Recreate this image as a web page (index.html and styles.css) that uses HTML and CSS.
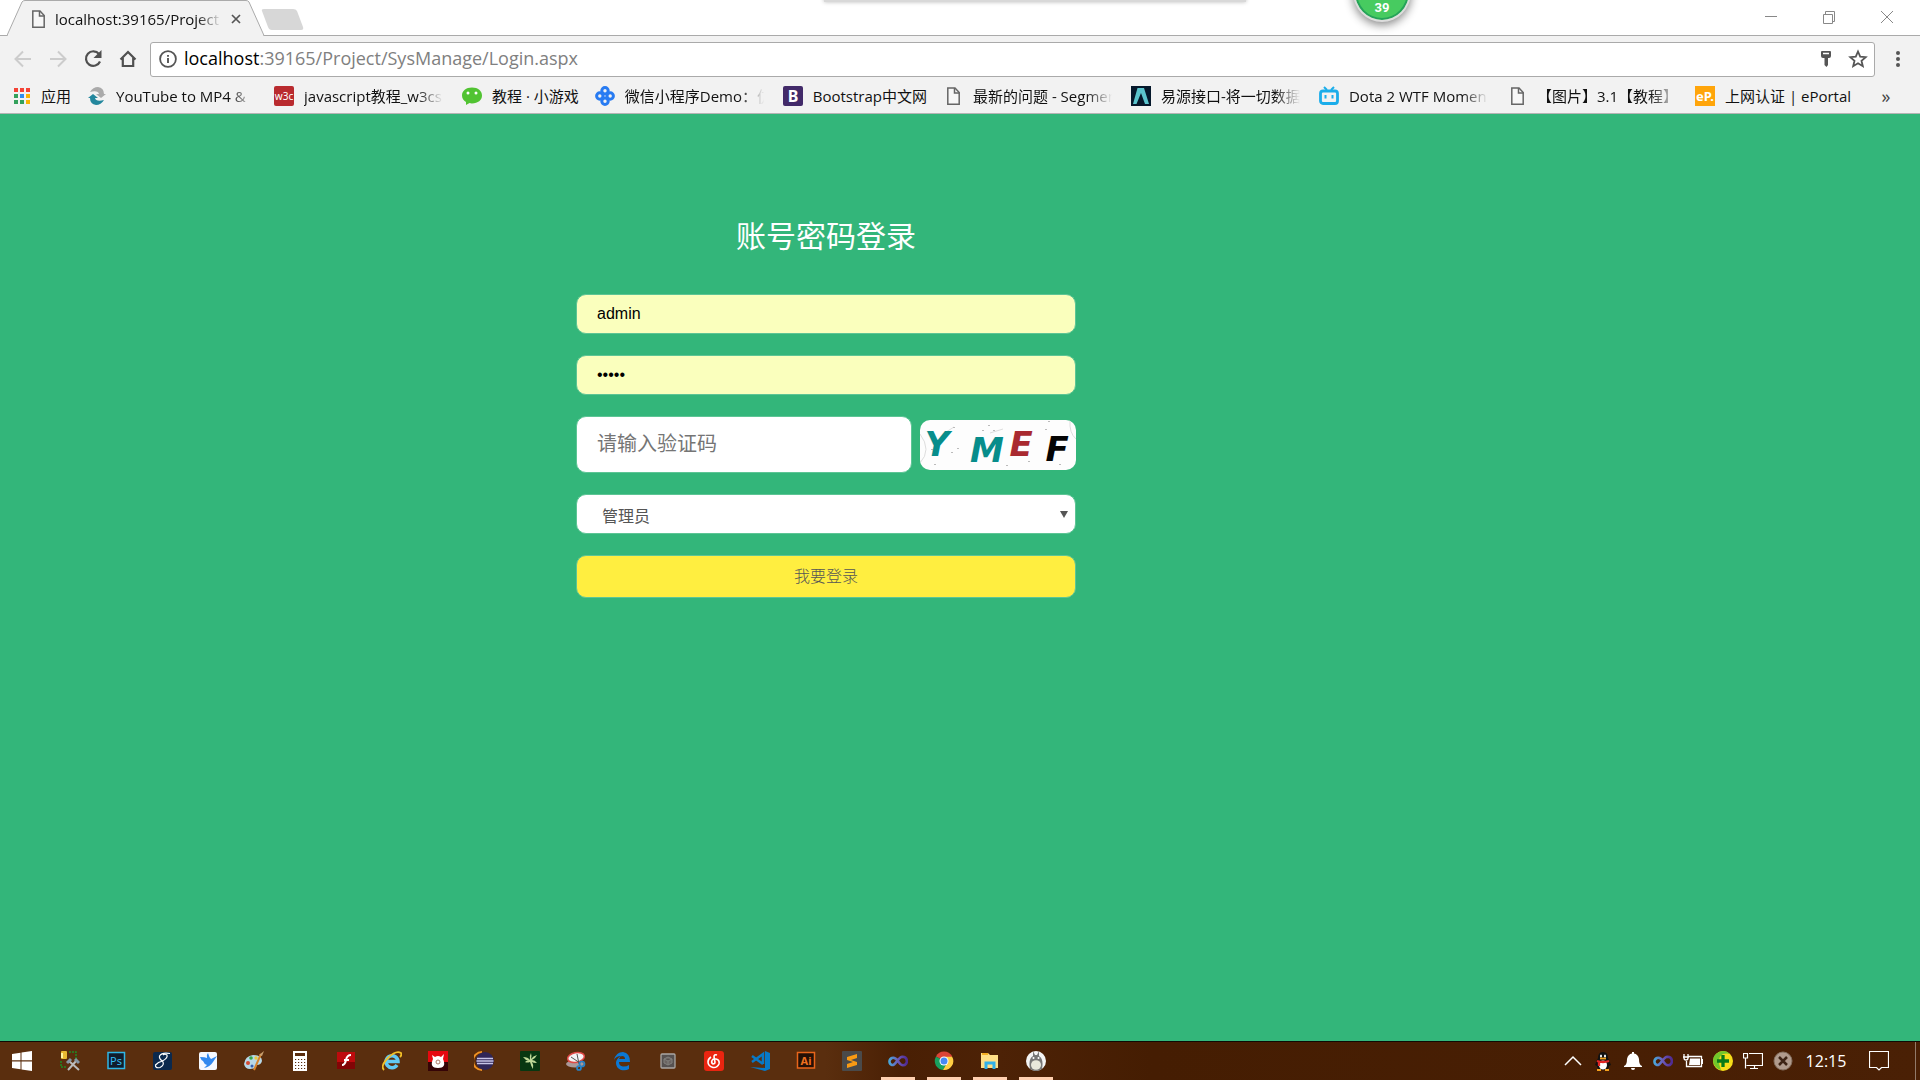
FILE: index.html
```html
<!DOCTYPE html>
<html lang="zh-CN">
<head>
<meta charset="utf-8">
<title>localhost:39165/Project/SysManage/Login.aspx</title>
<link rel="stylesheet" href="styles.css">
</head>
<body>
<svg class="defs" aria-hidden="true">
  <symbol id="doc" viewBox="0 0 20 20"><path d="M4.800 2H12L16.200 6.500V18.200H4.800Z" fill="#fff" fill-opacity=".4" stroke="#666" stroke-width="1.500"/><path d="M11.500 2V7H16.500" fill="none" stroke="#666" stroke-width="1.500"/></symbol>
  <linearGradient id="loop" x1="0" x2="1"><stop offset="0" stop-color="#49a5d8"/><stop offset=".5" stop-color="#6c58b8"/><stop offset="1" stop-color="#4f2a92"/></linearGradient>
  <symbol id="infinity" viewBox="0 0 20 20"><path d="M10 10C7.500 6.500 5.500 6.500 4 7C.5 8.500 .8 13 4 14C7.500 15 10 6 14.500 5.800C20 5.800 20.500 14 15 14.300C12.500 14.300 11.500 12 10 10Z" fill="none" stroke="url(#loop)" stroke-width="2.600"/></symbol>
</svg>

<header class="browser">
  <div class="tabstrip">
    <div class="tab">
      <svg class="tab-shape" viewBox="0 0 258 36" preserveAspectRatio="none" aria-hidden="true"><path d="M0 35.500L15 2Q16 .5 18 .5H239Q241 .5 242 2L257 35.500" fill="#f2f2f2" stroke="#aaa"/><path d="M1 35.500H256" stroke="#f2f2f2" stroke-width="2"/></svg>
      <svg class="ico20"><use href="#doc"/></svg>
      <span class="tab-title">localhost:39165/Project</span>
      <button class="tab-close" aria-label="关闭标签页"><svg viewBox="0 0 10 10"><path d="M1 1L9 9M9 1L1 9" stroke="#555" stroke-width="1.700"/></svg></button>
    </div>
    <button class="new-tab" aria-label="新标签页"><svg viewBox="0 0 44 22"><path d="M1 2Q0 0 3 0H32Q35 0 36 2L42 18Q43 21 40 21H11Q8 21 7 18Z" fill="#d7d7d7"/></svg></button>
    <div class="window-controls">
      <button aria-label="最小化"><svg viewBox="0 0 14 14"><path d="M1 6.500H13" stroke="#888"/></svg></button>
      <button aria-label="还原"><svg viewBox="0 0 14 14"><path d="M1.500 4.500H10.500V13.500H1.500ZM3.500 4V1.500H12.500V11.500H11" fill="none" stroke="#888"/></svg></button>
      <button aria-label="关闭"><svg viewBox="0 0 14 14"><path d="M1 1L13 13M13 1L1 13" stroke="#888"/></svg></button>
    </div>
  </div>
  <div class="toolbar">
    <button class="nav" aria-label="后退"><svg viewBox="0 0 20 20"><path d="M18 10H3M10 2.500L2.500 10L10 17.500" fill="none" stroke="#ccc" stroke-width="2"/></svg></button>
    <button class="nav" aria-label="前进"><svg viewBox="0 0 20 20"><path d="M2 10H17M10 2.500L17.500 10L10 17.500" fill="none" stroke="#ccc" stroke-width="2"/></svg></button>
    <button class="nav" aria-label="重新加载"><svg viewBox="0 0 20 20"><path d="M16 5A7.300 7.300 0 1 0 17 12.500" fill="none" stroke="#505050" stroke-width="2.200"/><path d="M18.500 1V9H10.500Z" fill="#505050"/></svg></button>
    <button class="nav" aria-label="主页"><svg viewBox="0 0 20 20"><path d="M2.500 10.500L10 3L17.500 10.500M4.800 9V17H15.200V9" fill="none" stroke="#505050" stroke-width="2.200"/></svg></button>
    <div class="omnibox">
      <svg class="ico18" viewBox="0 0 18 18"><circle cx="9" cy="9" r="7.900" fill="none" stroke="#555" stroke-width="1.800"/><path d="M9 8V13M9 5V6.700" stroke="#555" stroke-width="1.900"/></svg>
      <a class="url" href="#"><span class="host">localhost</span>:39165/Project/SysManage/Login.aspx</a>
      <button class="omni-btn" aria-label="密码"><svg viewBox="0 0 20 20"><path d="M5 3Q5 2 6 2H14Q15 2 15 3V7Q15 9 13 9H12V16L10.500 18L8.500 16V9H7Q5 9 5 7Z" fill="#555"/><path d="M7 4.500H13" stroke="#fff" stroke-width="1.500"/></svg></button>
      <button class="omni-btn" aria-label="收藏"><svg viewBox="0 0 20 20"><path d="M10 2.500L12.200 7.600L17.700 8.100L13.500 11.800L14.800 17.200L10 14.300L5.200 17.200L6.500 11.800L2.300 8.100L7.800 7.600Z" fill="none" stroke="#555" stroke-width="1.800"/></svg></button>
    </div>
    <button class="menu" aria-label="菜单"><svg viewBox="0 0 20 20"><g fill="#555"><circle cx="10" cy="4" r="2"/><circle cx="10" cy="10" r="2"/><circle cx="10" cy="16" r="2"/></g></svg></button>
  </div>
  <nav class="bookmarks">
    <a href="#"><svg class="ico20" viewBox="0 0 20 20"><g fill="#f44336"><path d="M2 2h4v4H2zM8 2h4v4H8zM14 2h4v4h-4z"/></g><path d="M2 8h4v4H2zM2 14h4v4H2zM8 14h4v4H8z" fill="#34a15c"/><path d="M8 8h4v4H8z" fill="#2f8df0"/><path d="M14 8h4v4h-4zM14 14h4v4h-4z" fill="#fbb404"/></svg><span class="label">应用</span></a>
    <a href="#"><svg class="ico20" viewBox="0 0 20 20"><path d="M3 6Q6 1 11 1Q17 2 17 8L19 8L14 12L9 8H12Q11 4 3 6Z" fill="#aaa"/><path d="M17 14Q14 19 9 19Q3 18 3 12L1 12L6 8L11 12H8Q9 16 17 14Z" fill="#23879d"/></svg><span class="label wide">YouTube to MP4 &amp;</span></a>
    <a href="#"><svg class="ico20" viewBox="0 0 20 20"><rect width="20" height="20" rx="2" fill="#b92b2f"/><text class="glyph" x="10" y="13.500" font-size="10" fill="#fff">w3c</text></svg><span class="label wide">javascript教程_w3cs</span></a>
    <a href="#"><svg class="ico20" viewBox="0 0 20 20"><path d="M10 1.500C4 1.500 0 5 0 9.500C0 12.500 1.500 14.500 4 16V19L7.500 17Q9 17.500 10 17.400C16 17.400 20 14 20 9.500S16 1.500 10 1.500Z" fill="#51c332"/><circle cx="6" cy="7" r="1.500" fill="#fff"/><circle cx="14" cy="7" r="1.500" fill="#fff"/></svg><span class="label">教程 · 小游戏</span></a>
    <a href="#"><svg class="ico20" viewBox="0 0 20 20"><g fill="none" stroke="#287bf2" stroke-width="3"><circle cx="10" cy="4.800" r="3.200"/><circle cx="4.800" cy="10" r="3.200"/><circle cx="15.200" cy="10" r="3.200"/><circle cx="10" cy="15.200" r="3.200"/></g></svg><span class="label wide">微信小程序Demo：仿</span></a>
    <a href="#"><svg class="ico20" viewBox="0 0 20 20"><rect width="20" height="20" rx="2" fill="#422a69"/><text class="glyph" x="10" y="15.500" font-size="16" font-weight="700" fill="#fff">B</text></svg><span class="label">Bootstrap中文网</span></a>
    <a href="#"><svg class="ico20"><use href="#doc"/></svg><span class="label wide">最新的问题 - Segmen</span></a>
    <a href="#"><svg class="ico20" viewBox="0 0 20 20"><rect width="20" height="20" fill="#06182b"/><path d="M2 18L6.500 2H13L18 18H14L10 7L5.500 18Z" fill="#5bc4cd"/></svg><span class="label wide">易源接口-将一切数据</span></a>
    <a href="#"><svg class="ico20" viewBox="0 0 20 20"><path d="M5 1L8 4M15 1L12 4" stroke="#1badea" stroke-width="2"/><rect x="1.500" y="5" width="17" height="12.500" rx="2.500" fill="none" stroke="#1badea" stroke-width="2.800"/><path d="M6.500 9V12.500M13.500 9V12.500" stroke="#1badea" stroke-width="2"/></svg><span class="label wide">Dota 2 WTF Momen</span></a>
    <a href="#"><svg class="ico20"><use href="#doc"/></svg><span class="label wide">【图片】3.1【教程】</span></a>
    <a href="#"><svg class="ico20" viewBox="0 0 20 20"><rect width="20" height="20" fill="#ffa50a"/><text class="glyph" x="10" y="15" font-size="13" font-weight="700" fill="#fff">eP.</text></svg><span class="label">上网认证 | ePortal</span></a>
    <button class="more" aria-label="更多书签">»</button>
  </nav>
</header>

<div class="drag-shadow"></div>
<div class="speed-ball">39</div>

<main class="page">
  <form class="login" onsubmit="return false">
    <h1>账号密码登录</h1>
    <input class="field filled" type="text" value="admin" aria-label="账号">
    <input class="field filled" type="password" value="admin" aria-label="密码">
    <div class="captcha-row">
      <input class="field code" type="text" placeholder="请输入验证码" aria-label="验证码">
      <svg class="captcha" viewBox="0 0 156 50" role="img" aria-label="验证码图片">
        <rect width="156" height="50" fill="#fdfdfd"/>
        <g fill="none" stroke="#ddd"><path d="M0 14Q12 30 0 43M150 0Q149 13 156 19M26 12L34 7M70 13L83 9"/></g>
        <g fill="#bbb"><path d="M33 7h2v1h-2zM11 29h2v1h-2zM31 32h2v1h-2zM37 28h2v1h-2zM14 44h2v1h-2zM62 10h2v1h-2zM73 10h2v1h-2zM128 1h2v1h-2zM125 9h2v1h-2zM108 41h2v1h-2zM86 45h2v1h-2zM139 44h2v1h-2zM68 5h2v1h-2z"/></g>
        <g class="captcha-letters">
          <text x="17" y="36" fill="#078d8b">Y</text>
          <text x="67" y="42" fill="#078d8b">M</text>
          <text x="101" y="36" fill="#a92a30">E</text>
          <text x="137" y="41" fill="#050505">F</text>
        </g>
      </svg>
    </div>
    <div class="select-wrap">
      <select class="field role" aria-label="角色"><option>管理员</option><option>教师</option><option>学生</option></select>
      <svg class="caret" viewBox="0 0 8 8" aria-hidden="true"><path d="M0 1H8L4 8Z" fill="#555"/></svg>
    </div>
    <button class="field submit" type="submit">我要登录</button>
  </form>
</main>

<footer class="taskbar">
  <button class="start" aria-label="开始"><svg class="ico20" viewBox="0 0 20 20"><path d="M0 3L8.500 1.800V9.300H0ZM9.500 1.600L20 0V9.300H9.500ZM0 10.400H8.500V18.200L0 17ZM9.500 10.400H20V20L9.500 18.400Z" fill="#fff"/></svg></button>
  <button class="app" aria-label="数据库工具"><svg class="ico20" viewBox="0 0 20 20"><path d="M9 1H16V8M1 10V16H6" fill="none" stroke="#218b25" stroke-width="1.500" stroke-dasharray="2 1"/><rect x="1" y="0" width="6" height="8" rx="1" fill="#e8b832"/><path d="M2 2V7" stroke="#fff3a0" stroke-width="2"/><path d="M8 19L17 9M9 10L19 19" stroke="#bbb" stroke-width="2"/><path d="M7 12L11 8M15 8L19 12" stroke="#8797a5" stroke-width="3"/></svg></button>
  <button class="app" aria-label="Photoshop"><svg class="ico20" viewBox="0 0 20 20"><rect x="2" y="1.500" width="16.500" height="16" fill="#101c2c" stroke="#2fb6e6" stroke-width="1.500"/><text class="glyph" x="10" y="13.500" font-size="11" fill="#35bdf0">Ps</text></svg></button>
  <button class="app" aria-label="字体工具"><svg class="ico20" viewBox="0 0 20 20"><rect x="1" y="1" width="19" height="18" rx="2" fill="#0b294d"/><path d="M18 2.500Q10 1 7.500 5Q7 8 10.500 10Q13 14 8 16.500Q3 17.500 3.500 14Q6 11 10.500 10Q16 7 15 4Q13 2.500 11 4" fill="none" stroke="#fff" stroke-width="1.200"/></svg></button>
  <button class="app" aria-label="迅雷"><svg class="ico20" viewBox="0 0 20 20"><rect x="1" y="1" width="18" height="18" rx="2" fill="#f5f8ff"/><path d="M2 6Q7 6 9 7Q8 4 10 2Q11 6 13 8L19 5L15 11Q12 16 6 17L9 14Q6 13 5 10Q3 9 2 6Z" fill="#3288ef"/></svg></button>
  <button class="app" aria-label="画图"><svg class="ico20" viewBox="0 0 20 20"><path d="M0 13Q1 5 9 4Q18 4 18 10Q17 14 13 14Q12 18 6 18Q1 18 0 13Z" fill="#b7d8e8"/><circle cx="4" cy="12" r="2" fill="#d44b33"/><circle cx="7" cy="7" r="1.800" fill="#36a34a"/><circle cx="12" cy="7" r="1.700" fill="#eec73b"/><circle cx="8" cy="15" r="1.500" fill="#375faf"/><path d="M10 19L17 3" stroke="#d7832c" stroke-width="2"/><path d="M15 4L20 0L18 5Z" fill="#c8a06f"/></svg></button>
  <button class="app" aria-label="计算器"><svg class="ico20" viewBox="0 0 20 20"><rect x="3" width="14" height="20" fill="#fff"/><path d="M5 2h10v3H5z" fill="#5a2d0e"/><path d="M5 8.500h11M5 11.500h11M5 14.500h11M5 17.500h11" stroke="#5a2d0e" stroke-width="1.200" stroke-dasharray="1.200 1.800"/></svg></button>
  <button class="app" aria-label="Flash"><svg class="ico20" viewBox="0 0 20 20"><rect x="1" y="1" width="18" height="17" fill="#bd0b0d"/><path d="M1 11H19V18H1Z" fill="#820506"/><path d="M15 4Q11 4 10 9Q9 14 6 14M8 9H13" fill="none" stroke="#fff" stroke-width="2"/></svg></button>
  <button class="app" aria-label="Internet Explorer"><svg class="ico20" viewBox="0 0 20 20"><path d="M5 10.500H16A6 6 0 1 0 15 14" fill="none" stroke="#62c9f4" stroke-width="3.500"/><path d="M2 19Q-2 15 6 7T19 2Q20 4 18 6" fill="none" stroke="#f2bf28" stroke-width="1.800"/></svg></button>
  <button class="app" aria-label="小熊"><svg class="ico20" viewBox="0 0 20 20"><rect width="20" height="20" fill="#e60810"/><path d="M0 11H20V20H0Z" fill="#350407"/><path d="M4 4L7 6Q10 4 13 6L16 3L15 8Q19 17 10 17T5 8Z" fill="#fff"/><circle cx="10" cy="11" r="2" fill="none" stroke="#a76"/></svg></button>
  <button class="app" aria-label="Eclipse"><svg class="ico20" viewBox="0 0 20 20"><path d="M8 1A9 9 0 0 0 8 19" fill="none" stroke="#f29222" stroke-width="2"/><circle cx="11" cy="10" r="9" fill="#302658"/><path d="M3 7.500H19M2.500 10H19.500M3 12.500H19" stroke="#c8c5e8" stroke-width="1.500"/></svg></button>
  <button class="app" aria-label="Dreamweaver"><svg class="ico20" viewBox="0 0 20 20"><rect width="20" height="20" rx="1" fill="#073711"/><path d="M3 6Q8 6 10 9Q9 5 11 2Q12 5 11 8Q13 5 17 4Q15 8 12 9Q15 9 17 12Q13 12 12 11Q14 14 13 18Q11 15 10 11Q7 12 5 11Q7 9 9 10Q5 9 3 6Z" fill="#bfd998"/></svg></button>
  <button class="app" aria-label="截图工具"><svg class="ico20" viewBox="0 0 20 20"><ellipse cx="9" cy="13" rx="9" ry="3.500" fill="#a99" /><ellipse cx="10" cy="6.500" rx="8.500" ry="4.800" transform="rotate(-12 10 6.500)" fill="#f4f4f4" stroke="#e04a46" stroke-width="1.500"/><path d="M5 6L14 12M11 3L13 13" stroke="#555"/><g fill="none" stroke="#2683c8" stroke-width="1.700"><circle cx="16" cy="13" r="2.500"/><circle cx="13" cy="17" r="2"/></g></svg></button>
  <button class="app" aria-label="Edge"><svg class="ico20" viewBox="0 0 20 20"><path d="M2 9Q4 1 11 1Q18 2 18 11H7Q7 15 11 15.500Q15 15.500 17 14V18Q14 20 9 19Q4 17 4 12Q4 8 9 5Q4 5 2 9ZM7 8H13Q13 5 10 5Q8 5 7 8Z" fill="#0b78d4"/></svg></button>
  <button class="app" aria-label="虚拟机"><svg class="ico20" viewBox="0 0 20 20"><rect x="3" y="3" width="14" height="14" rx="1" fill="#565150" stroke="#aaa7a4" stroke-width="1.300"/><path d="M10 6L14 8V12L10 14L6 12V8ZM6 8L10 10L14 8M10 10V14" fill="#6b6462" stroke="#81807d"/></svg></button>
  <button class="app" aria-label="网易云音乐"><svg class="ico20" viewBox="0 0 20 20"><rect width="20" height="20" rx="3" fill="#ea2510"/><path d="M13 4Q10 3 10 6L11 11Q11 13 9 13Q7 12 8 9.500Q9 7.500 12 8Q16 9 15 13Q13 17 9 16.500Q4 15 4 11Q4 8 7 6" fill="none" stroke="#fff" stroke-width="1.600"/></svg></button>
  <button class="app" aria-label="Visual Studio Code"><svg class="ico20" viewBox="0 0 20 20"><path d="M15 0L20 2V18L15 20L0 16L15 17Z" fill="#0879c7"/><path d="M2 5L13 13M2 11L13 3V13" fill="none" stroke="#0879c7" stroke-width="2.500"/></svg></button>
  <button class="app" aria-label="Illustrator"><svg class="ico20" viewBox="0 0 20 20"><rect x="1.500" y="1.500" width="17" height="15.500" fill="#241006" stroke="#e8651b" stroke-width="1.500"/><text class="glyph" x="10" y="13.500" font-size="11" font-weight="700" fill="#ef701f">Ai</text></svg></button>
  <button class="app" aria-label="Sublime Text"><svg class="ico20" viewBox="0 0 20 20"><rect width="20" height="20" rx="1" fill="#4a4a4a"/><path d="M5 6L15 3V7L9 9L15 11V14L5 17V13L11 11L5 9Z" fill="#f99a13"/></svg></button>
  <button class="app open" aria-label="Visual Studio"><svg class="ico20"><use href="#infinity"/></svg></button>
  <button class="app open" aria-label="Chrome"><svg class="ico20" viewBox="0 0 20 20"><path d="M2 5.500A9 9 0 0 1 18 5.500L10 10Z" fill="#dc4437"/><path d="M2 5.500A9 9 0 0 0 9 19L13 12L10 10Z" fill="#18a05e"/><path d="M18 5.500A9 9 0 0 1 9 19L13 12L12 5.500Z" fill="#ffce43"/><path d="M10 5.500H18L17 4H8Z" fill="#dc4437"/><circle cx="10" cy="10" r="4.500" fill="#fff"/><circle cx="10" cy="10" r="3.500" fill="#4688f4"/></svg></button>
  <button class="app open" aria-label="文件资源管理器"><svg class="ico20" viewBox="0 0 20 20"><path d="M1 2H8L10 4H18V17H1Z" fill="#ffdf87"/><path d="M2 3H8" stroke="#f4ad22" stroke-width="2"/><path d="M6 18V12H14V18" fill="none" stroke="#31b1e9" stroke-width="3"/></svg></button>
  <button class="app open" aria-label="龙猫"><svg class="ico20" viewBox="0 0 20 20"><circle cx="10" cy="10" r="10" fill="#f4f4f4"/><path d="M4 18Q2 8 7 5L7 0L9 4H11L13 0V5Q18 8 16 18Q10 22 4 18Z" fill="#777"/><ellipse cx="10" cy="14" rx="5" ry="4.800" fill="#e8e8dc"/><circle cx="7.500" cy="7" r="1" fill="#fff"/><circle cx="12.500" cy="7" r="1" fill="#fff"/></svg></button>
  <div class="tray">
    <button aria-label="显示隐藏的图标"><svg class="ico20" viewBox="0 0 20 20"><path d="M2 14L10 6L18 14" fill="none" stroke="#fff" stroke-width="1.500"/></svg></button>
    <button aria-label="QQ"><svg class="ico20" viewBox="0 0 20 20"><path d="M10 1Q15 1 15 7L18 14L16 15Q16 19 10 19T4 15L2 14L5 7Q5 1 10 1Z" fill="#111"/><ellipse cx="10" cy="14" rx="4" ry="4.500" fill="#fff"/><ellipse cx="8" cy="5" rx="1" ry="1.600" fill="#fff"/><ellipse cx="12" cy="5" rx="1" ry="1.600" fill="#fff"/><path d="M7 7.500H13" stroke="#f5a11b" stroke-width="1.800"/><path d="M4 10Q10 12 16 10M6 11V15" fill="none" stroke="#e12626" stroke-width="2.300"/><path d="M4 19H8M12 19H16" stroke="#f5a11b" stroke-width="2"/></svg></button>
    <button aria-label="通知"><svg class="ico20" viewBox="0 0 20 20"><path d="M1 15Q4 14 4 8Q5 3 9 2.500V1H11V2.500Q15 3 16 8Q16 14 19 15V16H1ZM8 17H12Q12 19 10 19T8 17Z" fill="#fff"/></svg></button>
    <button aria-label="Visual Studio"><svg class="ico20"><use href="#infinity"/></svg></button>
    <button aria-label="电池"><svg class="ico20" viewBox="0 0 20 20"><path d="M5 5.500H18.500V15.500H3.500V10M1 3V7Q1 9 3 9T5 7V3M0 6H6" fill="none" stroke="#fff" stroke-width="1.300"/><path d="M7 7.500H17V14H6Z" fill="#fff"/><path d="M19.500 8V13" stroke="#fff"/></svg></button>
    <button aria-label="安全卫士"><svg class="ico20" viewBox="0 0 20 20"><circle cx="10" cy="10" r="10" fill="#f6dd19"/><path d="M0 10A10 10 0 0 1 17 3Q14 2 10 3Q3 7 8 19A10 10 0 0 1 0 10Z" fill="#72c72b"/><path d="M10 4V16M4 10H16" stroke="#087a18" stroke-width="3.300"/></svg></button>
    <button aria-label="网络"><svg class="ico20" viewBox="0 0 20 20"><path d="M6 2.500H19.500V14.500H3.500M11.500 14.500V17.500M7 17.500H15M.5 2.500H4.500V7H.5ZM2.500 7V17.500" fill="none" stroke="#fff" stroke-width="1.200"/></svg></button>
    <button aria-label="音量"><svg class="ico20" viewBox="0 0 20 20"><circle cx="10" cy="10" r="9" fill="#b09b8d" stroke="#857060"/><path d="M6 6L14 14M14 6L6 14" stroke="#3d2415" stroke-width="2.500"/></svg></button>
    <time class="clock">12:15</time>
    <button class="notice" aria-label="操作中心"><svg class="ico20" viewBox="0 0 20 20"><path d="M.5 .5H19.500V16.500H12.500L10 19L7.500 16.500H.5Z" fill="none" stroke="#fff" stroke-width="1.200"/></svg></button>
    <span class="show-desktop"></span>
  </div>
</footer>
</body>
</html>
```
FILE: styles.css
```css
* { box-sizing: border-box; }
body {
  margin: 0;
  min-height: 100vh;
  display: flex;
  flex-direction: column;
  font-family: "Open Sans", "Noto Sans CJK SC", sans-serif;
  font-size: 15px;
  color: #111;
}
button { border: 0; padding: 0; background: none; font: inherit; color: inherit; display: flex; align-items: center; justify-content: center; }
a { color: inherit; text-decoration: none; }
svg { display: block; flex: none; }
.defs { position: absolute; width: 0; height: 0; }
.ico20 { width: 20px; height: 20px; }
.ico18 { width: 18px; height: 18px; }
.glyph { font-family: "Noto Sans", sans-serif; text-anchor: middle; }

.browser { background: #f2f2f2; border-bottom: 1px solid #b4b4b4; }
.tabstrip { display: flex; height: 36px; padding-left: 7px; background: #fff; border-bottom: 1px solid #aaa; }
.tab { position: relative; display: flex; align-items: center; width: 258px; height: 36px; padding: 2px 15px 0 21px; }
.tab > * { position: relative; }
.tab > .tab-shape { position: absolute; inset: 0; width: 100%; height: 100%; }
.tab-title { flex: 1; margin-left: 7px; overflow: hidden; white-space: nowrap; -webkit-mask-image: linear-gradient(to right, #000 85%, transparent); mask-image: linear-gradient(to right, #000 85%, transparent); }
.tab-close { width: 28px; height: 20px; }
.tab-close svg { width: 10px; height: 10px; }
.new-tab { align-self: flex-start; margin: 9px 0 0 -4px; position: relative; }
.new-tab svg { width: 44px; height: 22px; }
.window-controls { display: flex; margin-left: auto; padding-right: 4px; }
.window-controls button { width: 58px; height: 34px; }
.window-controls svg { width: 14px; height: 14px; }

.toolbar { display: flex; align-items: center; height: 46px; padding: 0 2px 0 5px; }
.nav { width: 35px; height: 35px; }
.nav svg, .menu svg, .omni-btn svg { width: 20px; height: 20px; }
.omnibox { flex: 1; display: flex; align-items: center; height: 35px; margin: 0 3px 0 5px; padding: 0 0 0 8px; border: 1px solid #aaa; border-radius: 3px; background: #fff; }
.url { flex: 1; margin-left: 7px; padding-bottom: 2px; font-size: 18px; line-height: 30px; color: #808080; }
.host { color: #000; }
.omni-btn { width: 32px; height: 30px; }
.menu { width: 40px; height: 35px; }

.bookmarks { display: flex; align-items: center; gap: 16px; height: 31px; padding: 0 20px 4px 12px; }
.bookmarks a { display: flex; align-items: center; gap: 9px; }
.label { overflow: hidden; white-space: nowrap; line-height: 24px; }
.wide { width: 142px; -webkit-mask-image: linear-gradient(to right, #000 80%, transparent 98%); mask-image: linear-gradient(to right, #000 80%, transparent 98%); }
.bookmarks a:nth-child(n+3) { gap: 10px; }
.more { margin-left: auto; width: 28px; font-size: 18px; color: #444; }

.drag-shadow { position: absolute; top: -8px; left: calc(43% - 2px); width: 22%; height: 10px; background: #d8d8d8; box-shadow: 0 0 4px #bbb; }
.speed-ball { position: absolute; top: -38px; left: calc(70% + 9px); width: 58px; height: 60px; padding-top: 34px; border: 2px solid #ddd; border-radius: 50%; background: #47cb60; box-shadow: 0 3px 10px #888, inset 0 0 0 2px #26a25a; color: #fff; font: bold 13px/20px Roboto, sans-serif; text-align: center; }

.page { flex: 1; background: #33b67a; }
.login { display: flex; flex-direction: column; gap: 21px; width: calc(26% + 1px); margin-left: 30%; padding-top: 101px; }
h1 { margin: 0 0 16px; font-size: 30px; line-height: 42px; font-weight: 400; color: #fff; text-align: center; }
.field { width: 100%; height: 40px; border: 1px solid #5dc595; border-radius: 10px; background: #fff; font-family: "Liberation Sans", "Noto Sans CJK SC", sans-serif; font-size: 16px; color: #555; outline: 0; }
.filled { padding: 0 20px 1px; background: #faffbd; color: #000; }
.captcha-row { display: flex; align-items: center; gap: 8px; }
.code { flex: 1; min-width: 0; height: 57px; padding: 0 20px; font-size: 20px; }
.code::placeholder { color: #757575; }
.captcha { width: 156px; height: 50px; border-radius: 10px; }
.captcha-letters { font-family: "DejaVu Sans", sans-serif; font-weight: 700; font-style: italic; font-size: 34px; text-anchor: middle; }
.select-wrap { position: relative; }
.role { display: block; appearance: none; padding: 5px 25px 0; }
.caret { position: absolute; right: 8px; top: 16px; width: 8px; height: 8px; pointer-events: none; }
.submit { height: 43px; padding-bottom: 3px; background: #ffee40; font-weight: 300; color: #555; }

.taskbar { display: flex; height: 39px; border-top: 1px solid #100b05; background: linear-gradient(to right, #5a2e0e 0, #5a2e0e 43%, #491f04 47%, #4d2206 52%, #451d02 60%, #4a2005 100%); color: #fff; }
.start { width: 47px; padding-right: 3px; }
.app { width: 46px; position: relative; }
.open::after { content: ""; position: absolute; left: 6px; right: 6px; bottom: 0; height: 3px; background: #ffd0b0; }
.tray { display: flex; align-items: center; margin-left: auto; }
.tray button { width: 30px; height: 38px; }
.clock { width: 56px; text-align: center; font-size: 16px; }
.tray .notice { width: 50px; }
.show-desktop { width: 5px; height: 38px; margin-left: 11px; border-left: 1px solid #927a6a; }
```
